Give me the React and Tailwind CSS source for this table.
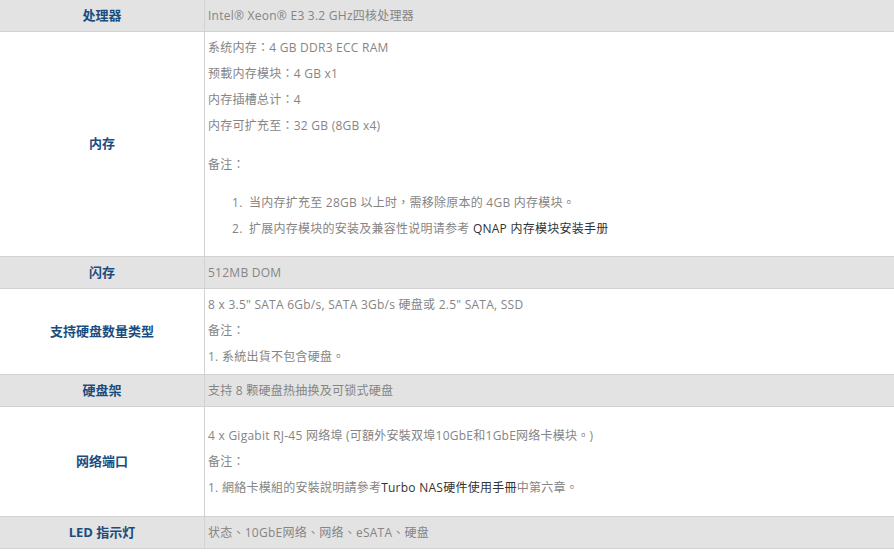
import React from "react";

const font = { fontFamily: '"Open Sans", "Noto Sans CJK TC", sans-serif' };

function Row({ label, grey, h, children, contentClass = "" }) {
  return (
    <div
      className={`flex border-b border-[#d2d2d2] ${grey ? "bg-[#e3e3e3]" : "bg-white"}`}
      style={{ height: h }}
    >
      <div className="w-[205px] shrink-0 border-r border-[#d2d2d2] flex items-center justify-center font-bold text-[13px] text-[#1a4c7e]">
        {label}
      </div>
      <div className={`flex-1 pl-[3px] text-[12px] tracking-[0.25px] text-[#858585] ${contentClass}`}>{children}</div>
    </div>
  );
}

export default function App() {
  return (
    <div className="w-[894px] h-[552px] bg-white overflow-hidden" style={font}>
      <Row label="处理器" grey h={32} contentClass="flex items-center">
        Intel® Xeon® E3 3.2 GHz四核处理器
      </Row>
      <Row label="内存" h={225} contentClass="flex flex-col pt-[3px] leading-[26px]">
        <p>系统内存：4 GB DDR3 ECC RAM</p>
        <p>预載内存模块：4 GB x1</p>
        <p>内存插槽总计：4</p>
        <p>内存可扩充至：32 GB (8GB x4)</p>
        <p className="mt-[13px]">备注：</p>
        <ol className="mt-[12px] pl-[38px] list-decimal">
          <li className="pl-[3px]">当内存扩充至 28GB 以上时，需移除原本的 4GB 内存模块。</li>
          <li className="pl-[3px]">
            扩展内存模块的安装及兼容性说明请参考 <span className="text-[#333]">QNAP 内存模块安装手册</span>
          </li>
        </ol>
      </Row>
      <Row label="闪存" grey h={32} contentClass="flex items-center">
        512MB DOM
      </Row>
      <Row label="支持硬盘数量类型" h={86} contentClass="flex flex-col pt-[3px] leading-[26px]">
        <p>8 x 3.5" SATA 6Gb/s, SATA 3Gb/s 硬盘或 2.5" SATA, SSD</p>
        <p>备注：</p>
        <p>1. 系統出貨不包含硬盘。</p>
      </Row>
      <Row label="硬盘架" grey h={32} contentClass="flex items-center">
        支持 8 颗硬盘热抽换及可锁式硬盘
      </Row>
      <Row label="网络端口" h={110} contentClass="flex flex-col pt-[16px] leading-[26px]">
        <p>4 x Gigabit RJ-45 网络埠 (可額外安裝双埠10GbE和1GbE网络卡模块。)</p>
        <p>备注：</p>
        <p>
          1. 網絡卡模組的安裝說明請參考<span className="text-[#333]">Turbo NAS硬件使用手冊</span>中第六章。
        </p>
      </Row>
      <Row label="LED 指示灯" grey h={32} contentClass="flex items-center">
        状态、10GbE网络、网络、eSATA、硬盘
      </Row>
    </div>
  );
}
